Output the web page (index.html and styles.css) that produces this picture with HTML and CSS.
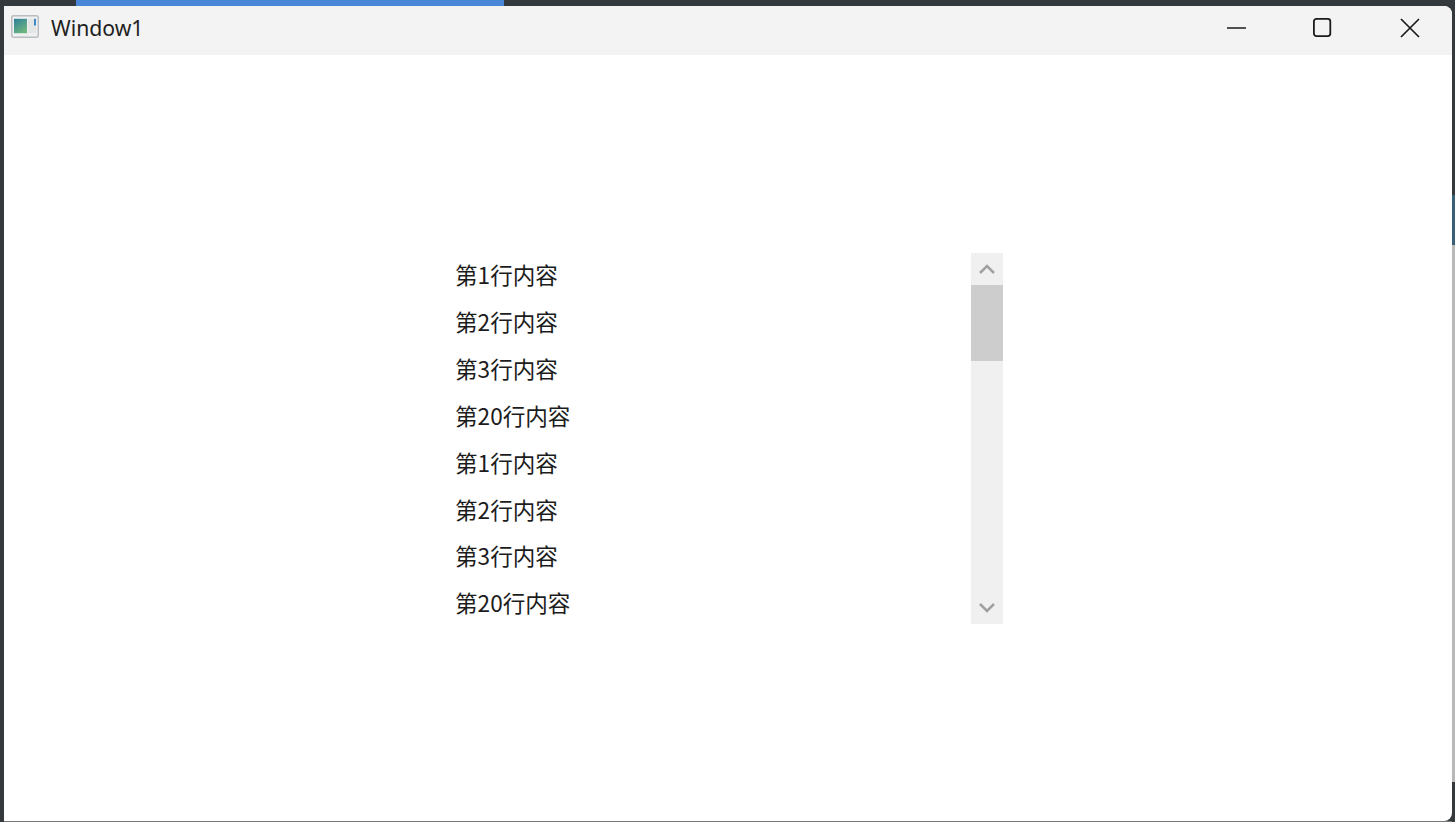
FILE: index.html
```html
<!DOCTYPE html>
<html lang="zh-CN">
<head>
  <meta charset="UTF-8" />
  <title>Window1</title>
  <link rel="stylesheet" href="styles.css">
</head>
<body>
  <div class="top-strip"></div>
  <div class="window">
    <div class="titlebar">
      <svg class="app-icon" width="28" height="23" viewBox="0 0 28 24" preserveAspectRatio="none">
        <defs>
          <linearGradient id="pane" x1="0" y1="0" x2="0.6" y2="1">
            <stop offset="0" stop-color="#2f7f9c" />
            <stop offset="1" stop-color="#6db57e" />
          </linearGradient>
        </defs>
        <rect x="0.75" y="0.75" width="26.5" height="22.5" rx="2" fill="#eef0f1" stroke="#b9bec2" stroke-width="1.5" />
        <rect x="3" y="4" width="13" height="15" fill="url(#pane)" />
        <rect x="17" y="4" width="8" height="15" fill="#e4e6e6" />
        <rect x="23" y="4" width="2" height="7" fill="#3f8ac4" />
      </svg>
      <span class="title">Window1</span>
      <div class="win-buttons">
        <svg width="20" height="20" viewBox="0 0 20 20">
          <path d="M1 10H20" stroke="#1b1b1b" stroke-width="1.4" fill="none" />
        </svg>
        <svg width="20" height="20" viewBox="0 0 20 20">
          <rect x="0.9" y="0.9" width="16.4" height="17.2" rx="2.5" stroke="#1b1b1b" stroke-width="1.8" fill="none" />
        </svg>
        <svg width="20" height="20" viewBox="0 0 20 20">
          <path d="M1 1L19 19M19 1L1 19" stroke="#1b1b1b" stroke-width="1.7" fill="none" />
        </svg>
      </div>
    </div>
    <div class="content">
      <div class="panel">
        <div class="list">
          <div class="row">第1行内容</div>
          <div class="row">第2行内容</div>
          <div class="row">第3行内容</div>
          <div class="row">第20行内容</div>
          <div class="row">第1行内容</div>
          <div class="row">第2行内容</div>
          <div class="row">第3行内容</div>
          <div class="row">第20行内容</div>
        </div>
        <div class="scrollbar">
          <div class="scroll-btn">
            <svg width="18" height="12" viewBox="0 0 18 12">
              <path d="M2 10L9 3L16 10" stroke="#a0a0a0" stroke-width="2.5" fill="none" />
            </svg>
          </div>
          <div class="thumb"></div>
          <div class="track"></div>
          <div class="scroll-btn">
            <svg width="18" height="12" viewBox="0 0 18 12">
              <path d="M2 2L9 9L16 2" stroke="#a0a0a0" stroke-width="2.5" fill="none" />
            </svg>
          </div>
        </div>
      </div>
    </div>
  </div>
</body>
</html>
```

FILE: styles.css
```css
html, body {
  height: 100%;
}

body {
  margin: 0;
  display: flex;
  flex-direction: column;
  overflow: hidden;
  background-color: #34393d;
  background-image:
    linear-gradient(#777, #777),
    linear-gradient(to bottom,
      #34393d 0, #34393d 195px,
      #3c5f78 195px, #3c5f78 245px,
      #b9b9b9 245px, #b9b9b9 782px,
      #34393d 782px);
  background-size: 1448px 1px, 3px 100%;
  background-position: 4px bottom, right top;
  background-repeat: no-repeat;
  font-family: "Noto Sans", "Noto Sans CJK SC", sans-serif;
}

.top-strip {
  flex: none;
  width: 428px;
  height: 6px;
  margin-left: 76px;
  background-color: #4a86d8;
}

.window {
  flex: 1;
  display: flex;
  flex-direction: column;
  margin: 0 3px 1px 4px;
  background-color: #fff;
  border-radius: 0 8px 8px 0;
  overflow: hidden;
}

.titlebar {
  flex: none;
  display: flex;
  align-items: center;
  height: 44px;
  padding: 0 0 5px 7px;
  background-color: #f3f3f3;
}

.app-icon {
  margin-top: -3px;
}

.title {
  margin: 0 0 2px 12px;
  font-size: 21.2px;
  color: #1f1f1f;
}

.win-buttons {
  display: flex;
  gap: 67px;
  margin-left: auto;
  margin-right: 32px;
}

.content {
  flex: 1;
  padding: 198px 0 0 451px;
}

.panel {
  display: flex;
  width: 548px;
  height: 371px;
}

.list {
  flex: 1;
  padding-top: 0.3px;
  overflow: hidden;
}

.row {
  height: 46.85px;
  line-height: 44.85px;
  font-family: "Noto Sans CJK SC", sans-serif;
  font-size: 22.6px;
  color: #1c1c1c;
}

.scrollbar {
  flex: none;
  display: flex;
  flex-direction: column;
  width: 32px;
  background-color: #f0f0f0;
}

.scroll-btn {
  flex: none;
  display: flex;
  align-items: center;
  justify-content: center;
  height: 32px;
}

.thumb {
  flex: none;
  height: 76px;
  background-color: #cdcdcd;
}

.track {
  flex: 1;
}
```
